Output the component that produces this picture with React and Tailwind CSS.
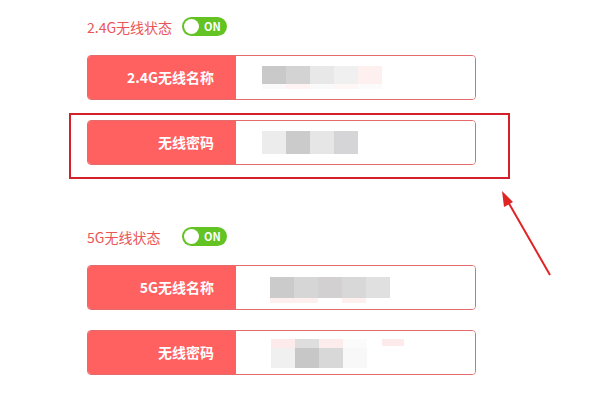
import React from "react";

const font = { fontFamily: '"Noto Sans CJK SC", "Noto Sans", sans-serif' };

function Toggle() {
  return (
    <div className="flex items-center w-[45px] h-[19px] rounded-full bg-[#62c322] pl-[2px]">
      <div className="w-[15px] h-[15px] rounded-full bg-white" />
      <span className="ml-[5px] text-[11px] font-bold leading-none text-white">ON</span>
    </div>
  );
}

function Title({ text }) {
  return (
    <div className="flex items-center h-[19px]">
      <span className="w-[95px] text-[14px] leading-none text-[#ea5656]">{text}</span>
      <Toggle />
    </div>
  );
}

// mosaic blocks standing in for blurred values
function Mosaic({ top, bottom, offset }) {
  return (
    <div className="flex flex-col" style={{ marginLeft: offset }}>
      {top && (
        <div className="flex h-[9px]">
          {top.map((c, i) => (
            <div key={i} className="w-[24px]" style={{ background: c }} />
          ))}
        </div>
      )}
      <div className="flex h-[20px]">
        {bottom.map((c, i) => (
          <div key={i} className="w-[24px]" style={{ background: c }} />
        ))}
      </div>
    </div>
  );
}

function Row({ label, children }) {
  return (
    <div className="flex h-[45px] w-[389px] rounded-[4px] border border-[#e36b6b] overflow-hidden">
      <div className="flex w-[148px] items-center justify-end pr-[22px] bg-[#ff6060] text-[14px] font-bold text-white">
        {label}
      </div>
      <div className="flex flex-1 items-center bg-white">{children}</div>
    </div>
  );
}

export default function App() {
  return (
    <div className="relative w-[600px] h-[400px] bg-white overflow-hidden" style={font}>
      <div className="flex flex-col pl-[87px] pt-[17px]">
        <Title text="2.4G无线状态" />
        <div className="mt-[19px]">
          <Row label="2.4G无线名称">
            <div className="flex flex-col ml-[26px]">
              <div className="flex h-[18px]">
                {["#c9c9c9", "#d3d3d3", "#e8e8e8", "#f0f0f0", "#fff0f0"].map((c, i) => (
                  <div key={i} className="w-[24px]" style={{ background: c }} />
                ))}
              </div>
              <div className="flex h-[5px]">
                {["#fafafa", "#fff3f3", "#fafafa", "#fff6f6", "#fbfbfb"].map((c, i) => (
                  <div key={i} className="w-[24px]" style={{ background: c }} />
                ))}
              </div>
            </div>
          </Row>
        </div>
        <div className="mt-[20px]">
          <Row label="无线密码">
            <div className="flex h-[23px] ml-[26px]">
              {["#ececec", "#cbcbcb", "#e6e6e6", "#d5d5d7"].map((c, i) => (
                <div key={i} className="w-[24px]" style={{ background: c }} />
              ))}
            </div>
          </Row>
        </div>

        <div className="mt-[62px]">
          <Title text="5G无线状态" />
        </div>
        <div className="mt-[19px]">
          <Row label="5G无线名称">
            <div className="flex flex-col ml-[34px] mt-[4px]">
              <div className="flex h-[21px]">
                {["#cbcbcb", "#d6d6d6", "#d2d0d0", "#d8d8d8", "#e0e0e0"].map((c, i) => (
                  <div key={i} className="w-[24px]" style={{ background: c }} />
                ))}
              </div>
              <div className="flex h-[5px]">
                {["#fff0f0", "#fff0f0", "#ffffff", "#fff0f0", "#ffffff"].map((c, i) => (
                  <div key={i} className="w-[24px]" style={{ background: c }} />
                ))}
              </div>
            </div>
          </Row>
        </div>
        <div className="mt-[20px]">
          <Row label="无线密码">
            <div className="flex items-start ml-[35px] mt-[2px]">
              <Mosaic
                offset={0}
                top={["#fdeaea", "#dedede", "#fdecec", "#fbfbfb"]}
                bottom={["#f0f0f0", "#c7c7c7", "#d8d8d8", "#f8f8f8"]}
              />
              <div className="ml-[15px] h-[7px] w-[22px] bg-[#fdeaea]" />
            </div>
          </Row>
        </div>
      </div>

      {/* annotation box around the password row */}
      <div className="absolute left-[69px] top-[113px] w-[441px] h-[66px] border-2 border-[#d4202a]" />

      {/* annotation arrow */}
      <svg className="absolute left-0 top-0" width="600" height="400">
        <line x1="550" y1="275" x2="507" y2="200" stroke="#e02424" strokeWidth="2" />
        <polygon points="502,191 513,202 504,207" fill="#e02424" />
      </svg>
    </div>
  );
}
